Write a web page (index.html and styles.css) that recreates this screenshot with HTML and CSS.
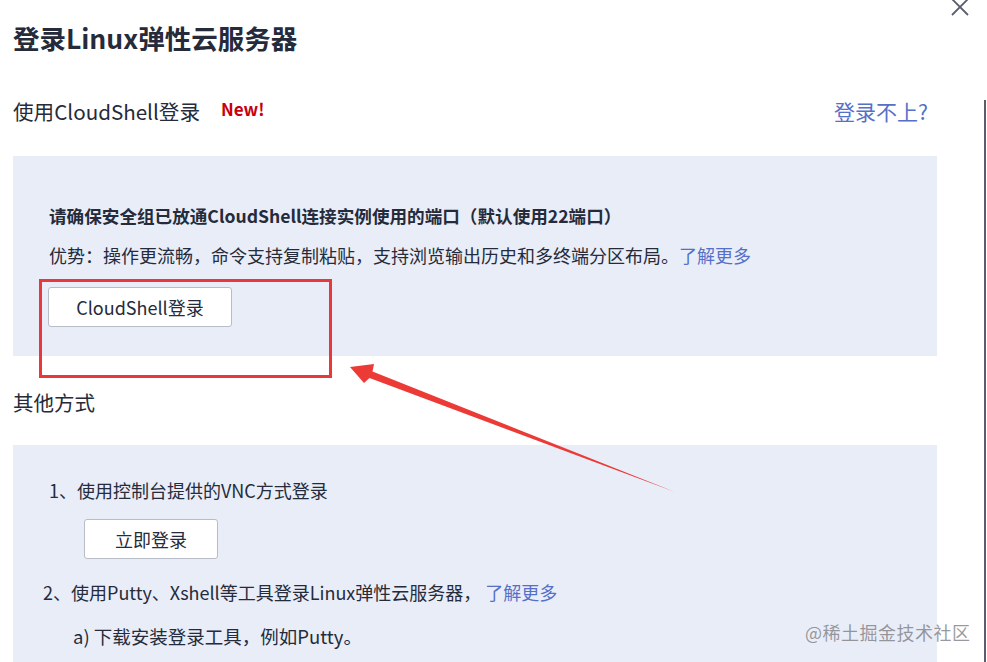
FILE: index.html
```html
<!DOCTYPE html>
<html lang="zh-CN">
<head>
<meta charset="utf-8">
<title>登录Linux弹性云服务器</title>
<link rel="stylesheet" href="styles.css">
</head>
<body>
<div class="dialog">
  <h1 class="title">登录Linux弹性云服务器</h1>
  <div class="section-head">
    <div class="section-title">使用CloudShell登录<span class="new">New!</span></div>
    <a class="link help">登录不上?</a>
  </div>
  <div class="panel panel-cloud">
    <p class="strong">请确保安全组已放通CloudShell连接实例使用的端口（默认使用22端口）</p>
    <p class="desc">优势：操作更流畅，命令支持复制粘贴，支持浏览输出历史和多终端分区布局。<a class="link">了解更多</a></p>
    <button class="btn btn-cloud">CloudShell登录</button>
  </div>
  <div class="other-title">其他方式</div>
  <div class="panel panel-other">
    <p class="item">1、使用控制台提供的VNC方式登录</p>
    <button class="btn btn-now">立即登录</button>
    <p class="item item2">2、使用Putty、Xshell等工具登录Linux弹性云服务器， <a class="link">了解更多</a></p>
    <p class="item sub">a) 下载安装登录工具，例如Putty。</p>
  </div>
</div>

<svg class="close" width="18" height="18" viewBox="0 0 18 18">
  <path d="M1 -1 L17 15 M17 -1 L1 15" stroke="#5a5f6b" stroke-width="1.8" fill="none"/>
</svg>
<div class="scrollbar"></div>
<div class="watermark">@稀土掘金技术社区</div>

<svg class="annot" width="987" height="662" viewBox="0 0 987 662">
  <rect x="40.5" y="280.5" width="290" height="96" fill="none" stroke="#e8383b" stroke-width="3"/>
  <polygon points="350,367 374,364 372.5,371.5 675,492 369.5,378 364,383" fill="#ec3b36"/>
</svg>
</body>
</html>
```
FILE: styles.css
```css
* { box-sizing: border-box; }
html, body {
  margin: 0;
  padding: 0;
  background: #ffffff;
  width: 987px;
  height: 662px;
  overflow: hidden;
}
body {
  font-family: "Noto Sans CJK SC", "Noto Sans", sans-serif;
  color: #252b3a;
  position: relative;
}
.dialog {
  padding: 20px 0 0 13px;
  width: 937px;
}
.title {
  margin: 0;
  font-size: 26.5px;
  line-height: 36px;
  font-weight: 700;
  color: #252b3a;
}
.section-head {
  margin-top: 40px;
  display: flex;
  justify-content: space-between;
  align-items: center;
  height: 30px;
}
.section-title {
  font-size: 20.6px;
  line-height: 30px;
  display: flex;
  align-items: center;
}
.new {
  color: #c7000b;
  font-weight: 700;
  font-size: 17px;
  margin-left: 21px;
  position: relative;
  top: -2px;
}
.link {
  color: #5470c8;
  text-decoration: none;
}
.help {
  font-size: 21px;
  line-height: 30px;
  margin-right: 9px;
}
.panel {
  background: #e9edf8;
  padding-left: 36px;
}
.panel-cloud {
  margin-top: 30px;
  padding-top: 46px;
  padding-bottom: 29px;
}
.strong {
  margin: 0;
  font-size: 17.6px;
  line-height: 28px;
  font-weight: 700;
}
.desc {
  margin: 11px 0 0;
  font-size: 18px;
  line-height: 28px;
}
.btn {
  display: block;
  font-family: inherit;
  background: #ffffff;
  border: 1px solid #b8bcc6;
  border-radius: 3px;
  color: #252b3a;
  font-size: 18px;
  height: 40px;
  padding: 0;
}
.btn-cloud {
  margin-top: 18px;
  margin-left: -1px;
  width: 184px;
}
.other-title {
  margin-top: 31px;
  font-size: 20.5px;
  line-height: 30px;
}
.panel-other {
  margin-top: 28px;
  padding-top: 31px;
  height: 240px;
}
.item {
  margin: 0;
  font-size: 18px;
  line-height: 28px;
}
.btn-now {
  margin-top: 15px;
  margin-left: 35px;
  width: 134px;
}
.item2 {
  margin-top: 19px;
  margin-left: -6px;
}
.sub {
  margin-top: 16px;
  margin-left: 24px;
  font-size: 18.5px;
}
.close {
  position: absolute;
  left: 951px;
  top: 0;
}
.scrollbar {
  position: absolute;
  left: 984px;
  top: 100px;
  width: 2px;
  height: 562px;
  background: #585d6e;
}
.watermark {
  position: absolute;
  left: 805px;
  top: 619px;
  font-size: 18px;
  line-height: 26px;
  color: rgba(120, 120, 125, 0.75);
  letter-spacing: 0.5px;
}
.annot {
  position: absolute;
  left: 0;
  top: 0;
  pointer-events: none;
}
```
